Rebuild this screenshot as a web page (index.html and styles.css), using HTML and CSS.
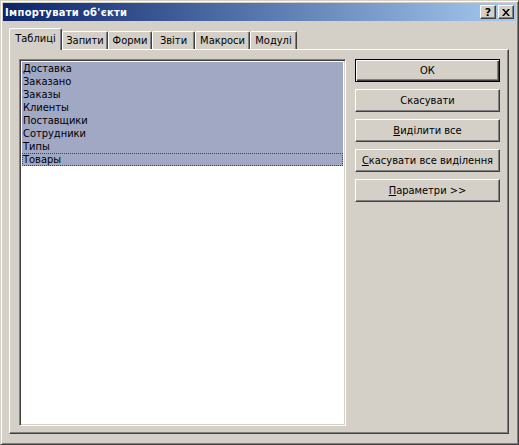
FILE: index.html
```html
<!DOCTYPE html>
<html lang="uk">
<head>
  <meta charset="UTF-8">
  <title>Імпортувати об'єкти</title>
  <link rel="stylesheet" href="styles.css">
</head>
<body>

<div class="window">
  <div class="titlebar">
    <span class="title">Імпортувати об'єкти</span>
    <div class="caption-buttons">
      <button class="cap-btn help">?</button>
      <button class="cap-btn close">
        <svg width="8" height="7" viewBox="0 0 8 7">
          <path d="M0 0h2l2 2.5L6 0h2L5 3.5 8 7H6L4 4.5 2 7H0l3-3.5z" fill="#000"/>
        </svg>
      </button>
    </div>
  </div>

  <div class="dialog">
    <div class="tabs">
      <div class="tab active">Таблиці</div>
      <div class="tab t-queries">Запити</div>
      <div class="tab t-forms">Форми</div>
      <div class="tab t-reports">Звіти</div>
      <div class="tab t-macros">Макроси</div>
      <div class="tab t-modules">Модулі</div>
    </div>

    <div class="panel">
      <div class="list">
        <div class="item sel">Доставка</div>
        <div class="item sel">Заказано</div>
        <div class="item sel">Заказы</div>
        <div class="item sel">Клиенты</div>
        <div class="item sel">Поставщики</div>
        <div class="item sel">Сотрудники</div>
        <div class="item sel">Типы</div>
        <div class="item sel focus">Товары</div>
      </div>

      <div class="actions">
        <button class="btn default">ОК</button>
        <button class="btn">Скасувати</button>
        <button class="btn"><u>В</u>иділити все</button>
        <button class="btn"><u>С</u>касувати все виділення</button>
        <button class="btn"><u>П</u>араметри &gt;&gt;</button>
      </div>
    </div>
  </div>
</div>

</body>
</html>
```

FILE: styles.css
```css
/* Класичне вікно діалогу */
body {
  margin: 0;
  padding: 0;
  background-color: #d4d0c8;
  font-family: 'DejaVu Sans Condensed', 'DejaVu Sans', Tahoma, sans-serif;
  font-size: 11px;
  color: #000;
}

.window {
  width: 519px;
  height: 445px;
  box-sizing: border-box;
  display: flex;
  flex-direction: column;
  padding: 2px;
  background-color: #d4d0c8;
  border: 1px solid;
  border-color: #d4d0c8 #404040 #404040 #d4d0c8;
  box-shadow: inset 1px 1px #fff, inset -1px -1px #808080;
}

.titlebar {
  height: 18px;
  display: flex;
  align-items: center;
  justify-content: space-between;
  padding: 0 2px 0 2px;
  background: linear-gradient(to right, #0a246a, #a6caf0);
}

.title {
  color: #fff;
  font-weight: bold;
  font-size: 11px;
  letter-spacing: 0.35px;
  white-space: nowrap;
}

.caption-buttons {
  display: flex;
}

.cap-btn {
  width: 16px;
  height: 14px;
  padding: 0;
  margin: 0;
  display: flex;
  align-items: center;
  justify-content: center;
  background-color: #d4d0c8;
  border: 1px solid;
  border-color: #fff #404040 #404040 #fff;
  box-shadow: inset -1px -1px #808080;
  font-family: 'DejaVu Sans', sans-serif;
  font-weight: bold;
  font-size: 11px;
  line-height: 1;
}

.cap-btn.close {
  margin-left: 2px;
}

.dialog {
  flex: 1;
  display: flex;
  flex-direction: column;
  padding: 7px 7px 8px 6px;
}

/* Вкладки */
.tabs {
  height: 21px;
  display: flex;
  align-items: flex-end;
}

.tab {
  height: 18px;
  box-sizing: border-box;
  display: flex;
  align-items: center;
  justify-content: center;
  background-color: #d4d0c8;
  border-top: 1px solid #fff;
  border-left: 1px solid #fff;
  border-right: 1px solid #404040;
  border-radius: 2px 2px 0 0;
  box-shadow: inset -1px 0 #808080;
  white-space: nowrap;
}

.tab.active {
  position: relative;
  z-index: 1;
  width: 53px;
  height: 22px;
  margin-bottom: -1px;
  padding-bottom: 2px;
}

.t-queries { width: 46px; }
.t-forms { width: 44px; }
.t-reports { width: 43px; }
.t-macros { width: 55px; }
.t-modules { width: 47px; }

.panel {
  flex: 1;
  display: flex;
  align-items: flex-start;
  padding: 9px 8px 6px 9px;
  border: 1px solid;
  border-color: #fff #404040 #404040 #fff;
  box-shadow: inset -1px -1px #808080;
}

/* Список */
.list {
  width: 327px;
  height: 367px;
  box-sizing: border-box;
  padding: 2px;
  background-color: #fff;
  border: 1px solid;
  border-color: #808080 #fff #fff #808080;
  box-shadow: inset 1px 1px #404040, inset -1px -1px #d4d0c8;
}

.item {
  height: 13px;
  line-height: 13px;
  padding-left: 1px;
  box-sizing: border-box;
  white-space: nowrap;
}

.item.sel {
  background-color: #a0a8c4;
}

.item.focus {
  outline: 1px dotted #4a4620;
  outline-offset: -1px;
}

/* Кнопки */
.actions {
  width: 145px;
  margin-left: 9px;
  display: flex;
  flex-direction: column;
  gap: 7px;
}

.btn {
  height: 23px;
  margin: 0;
  padding: 0;
  box-sizing: border-box;
  background-color: #d4d0c8;
  border: 1px solid;
  border-color: #fff #404040 #404040 #fff;
  box-shadow: inset -1px -1px #808080;
  font-family: inherit;
  font-size: 11px;
  color: #000;
}

.btn.default {
  border: 1px solid #000;
  box-shadow: inset 1px 1px #fff, inset -1px -1px #404040, inset -2px -2px #808080;
}
```
